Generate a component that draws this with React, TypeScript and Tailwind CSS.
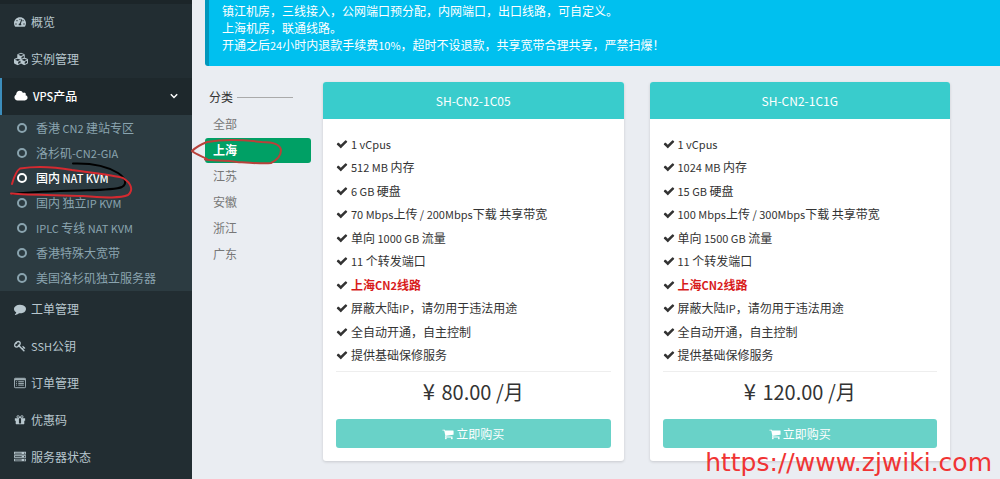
import { useState } from "react"
import type { ReactNode } from "react"
import { FaCubes, FaTachometerAlt } from "react-icons/fa"

type IconProps = { className?: string }

function Glyph({ d, width = 1792, className }: { d: string; width?: number; className?: string }) {
  return (
    <svg viewBox={`0 0 ${width} 1792`} className={className} fill="currentColor" aria-hidden="true">
      <path d={d} />
    </svg>
  )
}

const CloudIcon = ({ className }: IconProps) => (
  <Glyph
    className={className}
    width={2048}
    d="M1984 1152q0 159-112.5 271.5t-271.5 112.5h-1088q-185 0-316.5-131.5t-131.5-316.5q0-132 71-241.5t187-163.5q-2-28-2-43 0-212 150-362t362-150q158 0 286.5 88t187.5 230q70-62 166-62 106 0 181 75t75 181q0 75-41 138 129 30 213 134.5t84 239.5z"
  />
)

const CommentIcon = ({ className }: IconProps) => (
  <Glyph
    className={className}
    d="M1792 896q0 174-120 321.5t-326 233-450 85.5q-70 0-145-8-198 175-460 242-49 14-114 22-17 2-30.5-9t-17.5-29v-1q-3-4-.5-12t2-10 4.5-9.5l6-9 7-8.5 8-9q7-8 31-34.5t34.5-38 31-39.5 32.5-51 27-59 26-76q-157-89-247.5-220t-90.5-281q0-130 71-248.5t191-204.5 286-136.5 348-50.5q244 0 450 85.5t326 233 120 321.5z"
  />
)

const KeyIcon = ({ className }: IconProps) => (
  <Glyph
    className={className}
    d="M832 512q0-80-56-136t-136-56-136 56-56 136q0 42 19 83-41-19-83-19-80 0-136 56t-56 136 56 136 136 56 136-56 56-136q0-42-19-83 41 19 83 19 80 0 136-56t56-136zm851 704q0 17-49 66t-66 49q-9 0-28.5-16t-36.5-33-38.5-40-24.5-26l-96 96 220 220q28 28 28 68 0 42-39 81t-81 39q-40 0-68-28l-671-671q-176 131-365 131-163 0-265.5-102.5t-102.5-265.5q0-160 95-313t248-248 313-95q163 0 265.5 102.5t102.5 265.5q0 189-131 365l355 355 96-96q-3-3-26-24.5t-40-38.5-33-36.5-16-28.5q0-17 49-66t66-49q13 0 23 10 6 6 46 44.5t82 79.5 86.5 86 73 78 28.5 41z"
  />
)

const GiftIcon = ({ className }: IconProps) => (
  <Glyph
    className={className}
    d="M1056 1356v-716h-320v716q0 25 18 38.5t46 13.5h192q28 0 46-13.5t18-38.5zm-456-844h195l-126-161q-26-31-69-31-40 0-68 28t-28 68 28 68 68 28zm688-96q0-40-28-68t-68-28q-43 0-69 31l-125 161h194q40 0 68-28t28-68zm376 256v320q0 14-9 23t-23 9h-96v416q0 40-28 68t-68 28h-1088q-40 0-68-28t-28-68v-416h-96q-14 0-23-9t-9-23v-320q0-14 9-23t23-9h440q-93 0-158.5-65.5t-65.5-158.5 65.5-158.5 158.5-65.5q107 0 168 77l128 165 128-165q61-77 168-77 93 0 158.5 65.5t65.5 158.5-65.5 158.5-158.5 65.5h440q14 0 23 9t9 23z"
  />
)

const ServerIcon = ({ className }: IconProps) => (
  <Glyph
    className={className}
    d="M128 1408h1024v-128h-1024v128zm0-512h1024v-128h-1024v128zm1568 448q0-40-28-68t-68-28-68 28-28 68 28 68 68 28 68-28 28-68zm-1568-960h1024v-128h-1024v128zm1568 448q0-40-28-68t-68-28-68 28-28 68 28 68 68 28 68-28 28-68zm0-512q0-40-28-68t-68-28-68 28-28 68 28 68 68 28 68-28 28-68zm96 832v384h-1792v-384h1792zm0-512v384h-1792v-384h1792zm0-512v384h-1792v-384h1792z"
  />
)

const CheckIcon = ({ className }: IconProps) => (
  <Glyph
    className={className}
    d="M1671 566q0 40-28 68l-724 724-136 136q-28 28-68 28t-68-28l-136-136-362-362q-28-28-28-68t28-68l136-136q28-28 68-28t68 28l294 295 656-657q28-28 68-28t68 28l136 136q28 28 28 68z"
  />
)

const CartIcon = ({ className }: IconProps) => (
  <Glyph
    className={className}
    d="M704 1536q0 52-38 90t-90 38-90-38-38-90 38-90 90-38 90 38 38 90zm896 0q0 52-38 90t-90 38-90-38-38-90 38-90 90-38 90 38 38 90zm128-1088v512q0 24-16.5 42.5t-40.5 21.5l-1044 122q13 60 13 70 0 16-24 64h920q26 0 45 19t19 45-19 45-45 19h-1024q-26 0-45-19t-19-45q0-11 8-31.5t16-36 21.5-40 15.5-29.5l-177-823h-204q-26 0-45-19t-19-45 19-45 45-19h256q16 0 28.5 6.5t19.5 15.5 13 24.5 8 26 5.5 29.5 4.5 26h1201q26 0 45 19t19 45z"
  />
)

const ListIcon = ({ className }: IconProps) => (
  <svg viewBox="0 0 14 14" className={className} fill="none" stroke="currentColor" aria-hidden="true">
    <rect x="0.5" y="1.5" width="13" height="11" rx="1" />
    <path d="M1 2.5h12M1 3.2h12M2.5 5.5h1M5 5.5h6.5M2.5 7.5h1M5 7.5h6.5M2.5 9.5h1M5 9.5h6.5" />
  </svg>
)

const ChevronIcon = ({ className }: IconProps) => (
  <svg viewBox="0 0 8 8" className={className} fill="none" stroke="currentColor" strokeWidth="1.5" aria-hidden="true">
    <path d="M0.8 2.3 4 5.5l3.2-3.2" />
  </svg>
)

const vpsProducts = [
  "香港 CN2 建站专区",
  "洛杉矶-CN2-GIA",
  "国内 NAT KVM",
  "国内 独立IP KVM",
  "IPLC 专线 NAT KVM",
  "香港特殊大宽带",
  "美国洛杉矶独立服务器",
]

const regions = ["全部", "上海", "江苏", "安徽", "浙江", "广东"]

const plans = [
  { name: "SH-CN2-1C05", memory: "512 MB", disk: "6 GB", up: "70", down: "200", traffic: "1000", price: "80.00" },
  { name: "SH-CN2-1C1G", memory: "1024 MB", disk: "15 GB", up: "100", down: "300", traffic: "1500", price: "120.00" },
]

// Latin runs are set one size below the Chinese text around them
function Mixed({ text }: { text: string }) {
  return (
    <span className="whitespace-pre">
      {text.split(/([\x20-\x7e]+)/).map((run, index) =>
        index % 2 === 1 ? (
          <span key={index} className="text-[11px]">
            {run}
          </span>
        ) : (
          run
        ),
      )}
    </span>
  )
}

function NavItem({ icon, label }: { icon: ReactNode; label: string }) {
  return (
    <a
      href="#"
      className="flex h-[37px] items-center gap-[5px] pb-0.5 pl-3.5 text-[#b8c7ce] hover:bg-[#1e282c] hover:text-white"
    >
      {icon}
      <Mixed text={label} />
    </a>
  )
}

function PlanCard({ plan }: { plan: (typeof plans)[number] }) {
  const features = [
    "1 vCpus",
    `${plan.memory} 内存`,
    `${plan.disk} 硬盘`,
    `${plan.up} Mbps上传 / ${plan.down}Mbps下载 共享带宽`,
    `单向 ${plan.traffic} GB 流量`,
    "11 个转发端口",
    "上海CN2线路",
    "屏蔽大陆IP，请勿用于违法用途",
    "全自动开通，自主控制",
    "提供基础保修服务",
  ]

  return (
    <article className="overflow-hidden rounded-[3px] bg-white shadow-[0_1px_3px_rgba(0,0,0,0.15)]">
      <h2 className="bg-[#39cccc] text-center leading-[37px] text-white">{plan.name}</h2>
      <div className="p-[13px]">
        <ul className="grid h-[235px] auto-rows-fr">
          {features.map((feature) => (
            <li
              key={feature}
              className={`flex items-center gap-[3px] ${feature === "上海CN2线路" ? "font-bold text-[#d81b1b]" : ""}`}
            >
              <CheckIcon className="size-3 shrink-0 text-[#333]" />
              <Mixed text={feature} />
            </li>
          ))}
        </ul>
        <p className="mt-1 border-t border-[#eee] pb-[9px] text-center text-xl leading-[36px]">
          <span className="mr-0.5 text-[22px]">¥</span> {plan.price} /月
        </p>
        <button
          type="button"
          className="flex h-[29px] w-full items-center justify-center rounded-[3px] bg-[#69d2c8] text-white hover:bg-[#39cccc]"
        >
          <CartIcon className="mr-0.5 size-3" />
          立即购买
        </button>
      </div>
    </article>
  )
}

export default function App() {
  const [product, setProduct] = useState("国内 NAT KVM")
  const [region, setRegion] = useState("上海")

  return (
    <div className="relative flex min-h-screen overflow-hidden bg-[#eaedf2] font-['Noto_Sans_CJK_SC',sans-serif] text-xs text-[#333]">
      {/* Sidebar */}
      <aside className="w-48 shrink-0 border-t-4 border-[#1c2529] bg-[#222d32]">
        <nav>
          <NavItem icon={<FaTachometerAlt className="size-3" />} label="概览" />
          <NavItem icon={<FaCubes className="-mr-0.5 size-3.5" />} label="实例管理" />
          <a
            href="#"
            className="flex h-[37px] items-center border-l-2 border-[#3c8dbc] bg-[#1e282c] pr-3.5 pb-0.5 pl-3 font-medium text-white"
          >
            <CloudIcon className="mr-[5px] size-3.5" />
            <Mixed text="VPS产品" />
            <ChevronIcon className="ml-auto size-2" />
          </a>
          <ul className="bg-[#2c3b41] pb-px">
            {vpsProducts.map((name) => (
              <li key={name}>
                <a
                  href="#"
                  onClick={() => setProduct(name)}
                  className={`flex h-[25px] items-center gap-[9px] pl-[17px] ${
                    name === product ? "font-medium text-white" : "text-[#8aa4af] hover:text-white"
                  }`}
                >
                  <span className="size-2.5 rounded-full border-2 border-current" />
                  <Mixed text={name} />
                </a>
              </li>
            ))}
          </ul>
          <NavItem icon={<CommentIcon className="size-3" />} label="工单管理" />
          <NavItem icon={<KeyIcon className="size-3" />} label="SSH公钥" />
          <NavItem icon={<ListIcon className="size-3" />} label="订单管理" />
          <NavItem icon={<GiftIcon className="size-3" />} label="优惠码" />
          <NavItem icon={<ServerIcon className="size-3" />} label="服务器状态" />
        </nav>
      </aside>

      <main className="min-w-0 flex-1 pl-[13px]">
        {/* Notice */}
        <section className="rounded-bl-[3px] border-l-4 border-[#0097bc] bg-[#00c0ef] pt-0.5 pb-3 pl-[13px] leading-[17px] text-white">
          <p>镇江机房，三线接入，公网端口预分配，内网端口，出口线路，可自定义。</p>
          <p>上海机房，联通线路。</p>
          <p>
            <Mixed text="开通之后24小时内退款手续费10%，超时不设退款，共享宽带合理共享，严禁扫爆！" />
          </p>
        </section>

        <div className="flex items-start gap-3 pt-4 pr-[50px]">
          {/* Region filter */}
          <div className="w-[106px] shrink-0">
            <div className="flex h-[30px] items-center gap-1 pl-1">
              <span>分类</span>
              <hr className="w-14 border-[#aaa]" />
            </div>
            <ul>
              {regions.map((name) => (
                <li key={name} className="h-[26px]">
                  <button
                    type="button"
                    onClick={() => setRegion(name)}
                    className={`h-[25px] w-full rounded-[3px] pb-0.5 pl-2 text-left ${
                      name === region ? "bg-[#00a065] font-bold text-white" : "text-[#777] hover:text-[#333]"
                    }`}
                  >
                    {name}
                  </button>
                </li>
              ))}
            </ul>
          </div>

          <div className="grid flex-1 grid-cols-2 gap-[26px]">
            {plans.map((plan) => (
              <PlanCard key={plan.name} plan={plan} />
            ))}
          </div>
        </div>
      </main>

      {/* Hand drawn marks over the sidebar and the region filter */}
      <svg
        className="pointer-events-none absolute top-0 left-0"
        width="320"
        height="220"
        fill="none"
        strokeLinecap="round"
        strokeLinejoin="round"
        aria-hidden="true"
      >
        <path
          d="M73 163.500C90 163 107 166 118 173C126 178 127 184 122 187C115 190 98 190 80 190.500C55 191 32 192 13 194"
          stroke="#000"
          strokeWidth="2"
        />
        <path
          d="M12 184C14 177 16 171 20 168.500C36 166 55 167 72 170C92 173 112 175 123 178C131 183 134 190 128 195C119 199 100 197 83 196C55 195 30 195 11 193.500"
          stroke="#d42a30"
          strokeWidth="2"
        />
        <path
          d="M205 159.500C212 161 225 160 237 162C252 163 264 164 271 163C277 160 281 155 281 150C280 144 273 142 262 142C245 140 224 139 207 142C202 144 196 147 192 151C195 154 204 157 207 159"
          stroke="#b8413a"
          strokeWidth="2"
        />
      </svg>

      <span className="absolute right-2 bottom-0 font-['DejaVu_Sans',sans-serif] text-[25px] leading-8 text-[#f03434]">
        https://www.zjwiki.com
      </span>
    </div>
  )
}
